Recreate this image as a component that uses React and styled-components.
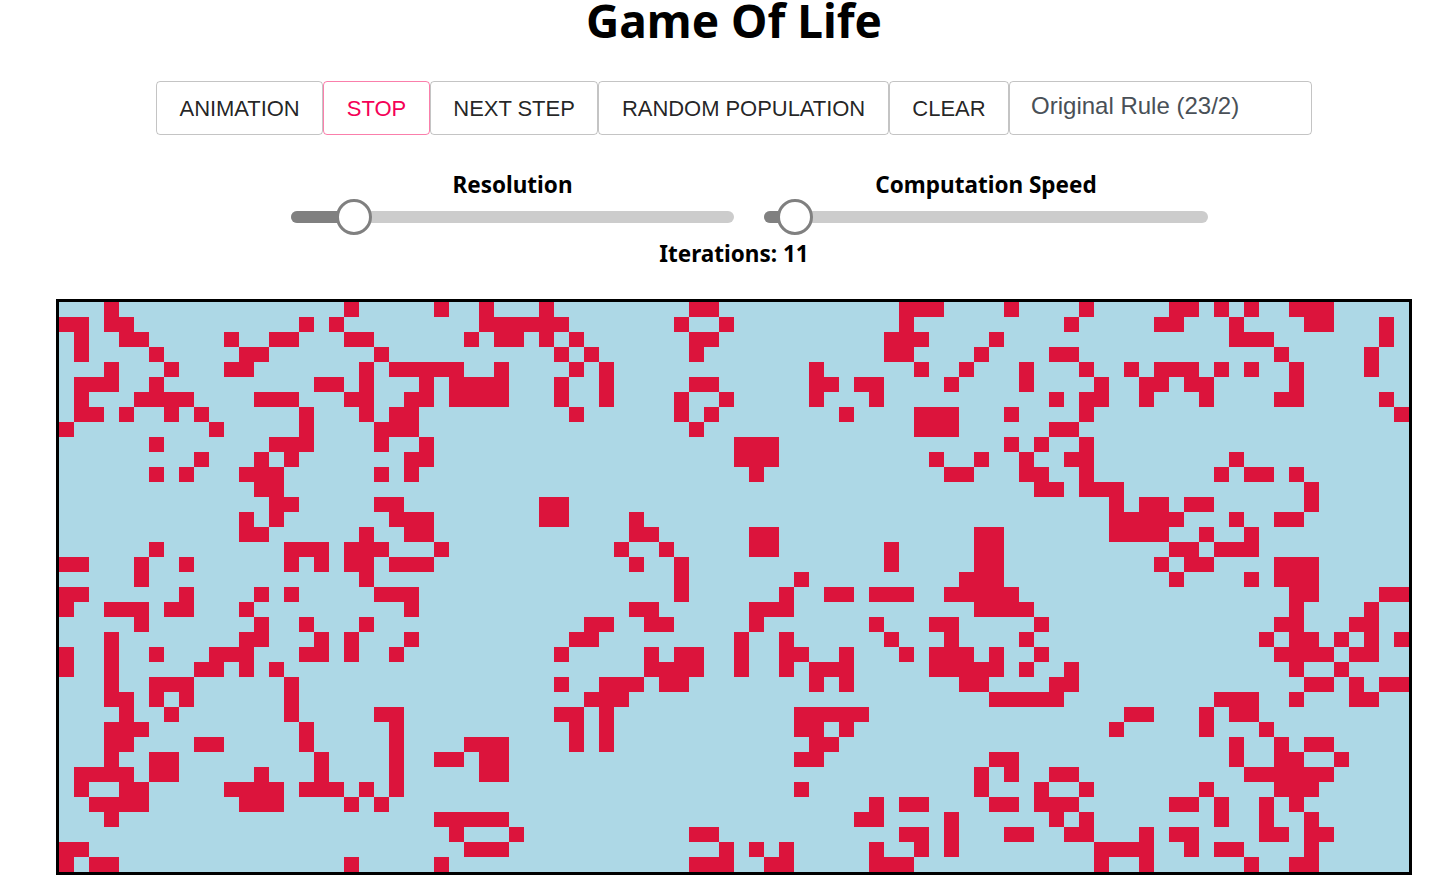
import styled, { createGlobalStyle } from 'styled-components';

const GlobalStyle = createGlobalStyle`
  html, body {
    margin: 0;
    padding: 0;
    background: #fff;
  }
  body {
    font-family: "Noto Sans", "Open Sans", sans-serif;
    overflow: hidden;
  }
`;

// live cells per row, "a-b" is a run of columns
const ROWS = [
  '3 19 25 28 32 42-43 56-58 63 68 74-75 77 79 82-84',
  '0-1 3-4 16 18 28-33 41 44 56 67 73-74 78 83-84 88',
  '1 4-5 11 14-15 19-20 27 29-30 32 34 42-43 55-57 62 78-80 88',
  '1 6 12-13 21 33 35 42 55-56 61 66-67 81 87',
  '3 7 11-12 20 22-26 29 34 36 50 57 60 64 68 71 73-75 77 79 82 87',
  '1-3 6 17-18 20 24 26-29 33 36 42-43 50-51 53-54 59 64 69 72-73 75-76 82',
  '1 5-8 13-15 19-20 23-24 26-29 33 36 41 44 50 54 66 68-69 72 76 81-82 88',
  '1-2 4 7 9 16 20 22-23 34 41 43 52 57-59 63 68 89',
  '0 10 16 21-23 42 57-59 66-67',
  '6 14-16 21 24 45-47 63 65 68',
  '9 13 15 23-24 45-47 58 61 64 67-68 78',
  '6 8 12-14 21 23 46 59-60 64-65 68 77 79-80 82',
  '13-14 65-66 68-70 83',
  '14-15 21-22 32-33 70 72-73 75-76 83',
  '12 14 22-24 32-33 38 70-74 78 81-82',
  '12-13 20 23-24 38-39 46-47 61-62 70-73 76 79',
  '6 15-17 19-21 25 37 40 46-47 55 61-62 74-75 77-79',
  '0-1 5 8 15 17 19-20 22-24 38 41 55 61-62 73 75-76 81-83',
  '5 20 41 49 60-62 74 79 81-83',
  '0-1 8 13 15 21-23 41 48 51-52 54-56 59-63 82-83 88-89',
  '0 3-5 7-8 12 23 38-39 46-48 61-64 82 87',
  '5 13 16 20 35-36 39-40 46 54 58-59 65 81-82 86-87',
  '3 12-13 17 19 23 34-35 45 48 55 59 64 80 82-83 85 87 89',
  '0 3 6 10-12 16-17 19 22 33 39 41-42 45 48-49 52 56 58-60 62 65 81-84 86-87',
  '0 3 9-10 12 14 39-42 45 48 50-52 58-62 64 67 82 85',
  '3 6-8 15 33 36-38 40-41 50 52 60-61 66-67 83-84 86 88-89',
  '3-4 6 8 15 35-37 62-66 77-79 82 86-87',
  '4 7 15 21-22 33-34 36 49-53 71-72 76 78-79',
  '3-5 16 22 34 36 49-50 52 70 76 80',
  '3-4 9-10 16 22 27-29 34 36 50-51 78 81 83-84',
  '3 6-7 17 22 25-26 28-29 49-50 62-63 78 81-82 85',
  '1-4 6-7 13 17 22 28-29 61 63 66-67 79-84',
  '1 4-5 11-14 16-18 20 22 49 61 65 68 76 81-83',
  '2-5 12-14 19 21 54 56-57 62-63 65-67 74-75 77 80 82',
  '3 25-29 53-54 59 66 68 77 80 83',
  '26 30 42-43 56-57 59 63-64 67-68 72 74-75 80-81 83-84',
  '0-1 27-29 44 46 48 54 57 59 69-72 75 77-78 83',
  '0 2-3 19 25 42-44 47-48 54-56 69 72 79 82-83',
];

const COLS = 90;

const board = ROWS.map((row) => {
  const cells = new Array(COLS).fill(false);
  row.split(' ').forEach((part) => {
    const [from, to] = part.split('-').map(Number);
    for (let c = from; c <= (to ?? from); c++) cells[c] = true;
  });
  return cells;
});

const BUTTONS = ['ANIMATION', 'STOP', 'NEXT STEP', 'RANDOM POPULATION', 'CLEAR'];

const Page = styled.div`
  width: 1432px;
  box-sizing: border-box;
  padding-left: 36px;
  display: flex;
  flex-direction: column;
  align-items: center;
`;

const Title = styled.h1`
  margin: 0;
  height: 81px;
  font-size: 46px;
  line-height: 40px;
  font-weight: 700;
  color: #000;
`;

const Toolbar = styled.div`
  display: flex;
  height: 54px;
`;

const Button = styled.button`
  box-sizing: border-box;
  height: 54px;
  padding: 0 22.6px;
  background: transparent;
  border: 1px solid ${(p) => (p.$active ? 'rgba(245, 0, 87, 0.5)' : 'rgba(0, 0, 0, 0.23)')};
  border-radius: 4px;
  color: ${(p) => (p.$active ? '#f50057' : 'rgba(0, 0, 0, 0.87)')};
  font-family: "Liberation Sans", Arial, sans-serif;
  font-size: 22px;
  letter-spacing: -0.05px;
  line-height: 54px;
`;

const RuleSelect = styled.div`
  box-sizing: border-box;
  width: 303px;
  height: 54px;
  padding: 10px 21px 0;
  border: 1px solid rgba(0, 0, 0, 0.23);
  border-radius: 4px;
  color: #495057;
  font-family: "Liberation Sans", Arial, sans-serif;
  font-size: 24px;
  line-height: 28px;
`;

const Sliders = styled.div`
  display: flex;
  gap: 30px;
  margin-top: 34px;
  padding-left: 31px;
`;

const SliderBox = styled.div`
  width: ${(p) => p.$width}px;
  display: flex;
  flex-direction: column;
  align-items: center;
`;

const Label = styled.div`
  height: 38px;
  font-size: 22.5px;
  line-height: 32px;
  font-weight: 700;
  color: #000;
`;

const Rail = styled.div`
  position: relative;
  width: 100%;
  height: 12px;
  margin-top: 4px;
  border-radius: 6px;
  background: #ccc;
`;

const Track = styled.div`
  height: 100%;
  border-radius: 6px 0 0 6px;
  background: #808080;
`;

const Handle = styled.div`
  position: absolute;
  top: -12px;
  box-sizing: border-box;
  width: 36px;
  height: 36px;
  margin-left: -18px;
  border: 3px solid #808080;
  border-radius: 50%;
  background: #fff;
`;

const Iterations = styled.div`
  height: 60px;
  margin-top: 16px;
  font-size: 22.5px;
  line-height: 30px;
  font-weight: 700;
  color: #000;
`;

const Board = styled.div`
  display: grid;
  grid-template-columns: repeat(${COLS}, 15px);
  grid-auto-rows: 15px;
  border: 3px solid #000;
  background: #add8e6;
`;

const Cell = styled.div`
  background: ${(p) => (p.$alive ? '#dc143c' : 'transparent')};
`;

function Slider({ label, width, offset }) {
  return (
    <SliderBox $width={width}>
      <Label>{label}</Label>
      <Rail>
        <Track style={{ width: offset }} />
        <Handle style={{ left: offset }} />
      </Rail>
    </SliderBox>
  );
}

export default function App() {
  return (
    <Page>
      <GlobalStyle />
      <Title>Game Of Life</Title>
      <Toolbar>
        {BUTTONS.map((name) => (
          <Button key={name} $active={name === 'STOP'}>{name}</Button>
        ))}
        <RuleSelect>Original Rule (23/2)</RuleSelect>
      </Toolbar>
      <Sliders>
        <Slider label="Resolution" width={443} offset={63} />
        <Slider label="Computation Speed" width={444} offset={31} />
      </Sliders>
      <Iterations>Iterations: 11</Iterations>
      <Board>
        {board.map((row, r) =>
          row.map((alive, c) => <Cell key={`${r}-${c}`} $alive={alive} />)
        )}
      </Board>
    </Page>
  );
}
